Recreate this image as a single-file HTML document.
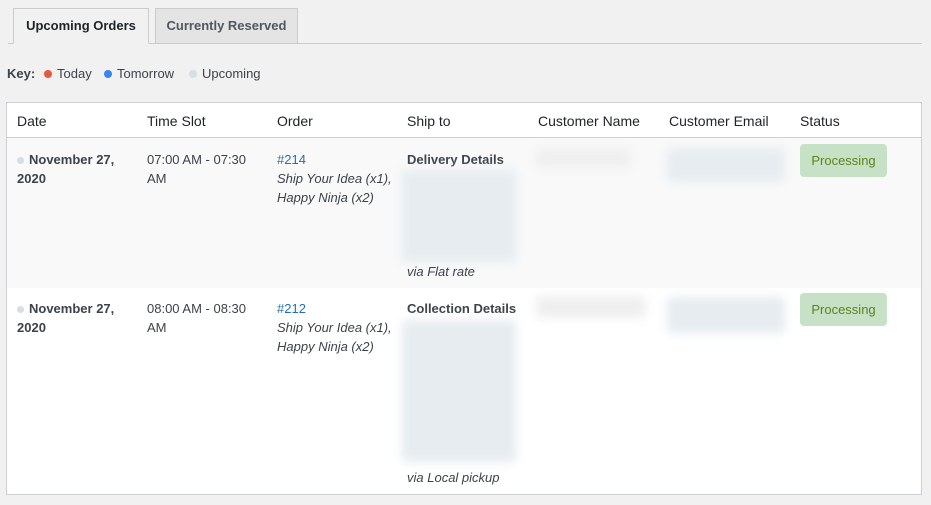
<!DOCTYPE html>
<html><head><style>
*{margin:0;padding:0;box-sizing:border-box}
body{width:931px;height:505px;background:#f1f1f1;font-family:"Liberation Sans",sans-serif;color:#3c434a;font-size:13px;position:relative;overflow:hidden}
.a{position:absolute;white-space:nowrap}
.tab{position:absolute;top:8px;height:36px;border:1px solid #ccc;font-weight:bold;font-size:13px;line-height:34px;text-align:center}
.dot{display:inline-block;width:8px;height:8px;border-radius:50%;margin-right:5px;vertical-align:0}
.blur{position:absolute;background:#e6ecf0;filter:blur(5px);border-radius:4px}
.b{font-weight:bold}
.i{font-style:italic}
.lk{color:#2271b1}
.st{position:absolute;left:800px;width:87px;height:33px;background:#c6e1c6;color:#5b841b;border-radius:4px;text-align:center;line-height:33px;font-size:13px}
</style></head><body>
<div class="a" style="left:8px;top:43px;width:914px;height:1px;background:#ccc"></div>
<div class="tab" style="left:13px;width:136px;background:#f1f1f1;border-bottom-color:#f1f1f1;color:#1d2327">Upcoming Orders</div>
<div class="tab" style="left:155px;width:143px;background:#e4e4e4;color:#50575e">Currently Reserved</div>
<div class="a" style="left:7px;top:66px;font-size:13px;color:#3c434a"><b>Key:</b><span style="margin-left:8px" class="dot" style="background:#e9573f"></span></div>
<div class="a" style="left:44px;top:66px"><span class="dot" style="background:#e9573f"></span>Today</div>
<div class="a" style="left:104px;top:66px"><span class="dot" style="background:#3d83ea"></span>Tomorrow</div>
<div class="a" style="left:189px;top:66px"><span class="dot" style="background:#d5dfe4"></span>Upcoming</div>
<div class="a" style="left:6px;top:102px;width:916px;height:393px;background:#fff;border:1px solid #ccd0d4"></div>
<div class="a" style="left:7px;top:137px;width:914px;height:1px;background:#ccd0d4"></div>
<div class="a" style="left:7px;top:138px;width:914px;height:150px;background:#f9f9f9"></div>
<div class="a" style="top:113px;left:17px;font-size:14px;color:#1d2327">Date</div>
<div class="a" style="top:113px;left:147px;font-size:14px;color:#1d2327">Time Slot</div>
<div class="a" style="top:113px;left:277px;font-size:14px;color:#1d2327">Order</div>
<div class="a" style="top:113px;left:407px;font-size:14px;color:#1d2327">Ship to</div>
<div class="a" style="top:113px;left:538px;font-size:14px;color:#1d2327">Customer Name</div>
<div class="a" style="top:113px;left:669px;font-size:14px;color:#1d2327">Customer Email</div>
<div class="a" style="top:113px;left:800px;font-size:14px;color:#1d2327">Status</div>

<div class="a" style="top:150px;left:17px;line-height:19px"><span class="dot" style="background:#d5dfe4;width:7px;height:7px"></span><b>November 27,</b><br><b>2020</b></div>
<div class="a" style="top:150px;left:147px;line-height:19px">07:00 AM - 07:30<br>AM</div>
<div class="a" style="top:150px;left:277px;line-height:19px"><span class="lk">#214</span><br><span class="i">Ship Your Idea (x1),<br>Happy Ninja (x2)</span></div>
<div class="a b" style="top:150px;left:407px;line-height:19px">Delivery Details</div>
<div class="blur" style="left:402px;top:170px;width:114px;height:92px"></div>
<div class="a i" style="top:264px;left:407px">via Flat rate</div>
<div class="blur" style="left:536px;top:148px;width:95px;height:20px;background:#efefef"></div>
<div class="blur" style="left:667px;top:148px;width:118px;height:34px"></div>
<div class="st" style="top:144px">Processing</div>

<div class="a" style="top:299px;left:17px;line-height:19px"><span class="dot" style="background:#d5dfe4;width:7px;height:7px"></span><b>November 27,</b><br><b>2020</b></div>
<div class="a" style="top:299px;left:147px;line-height:19px">08:00 AM - 08:30<br>AM</div>
<div class="a" style="top:299px;left:277px;line-height:19px"><span class="lk">#212</span><br><span class="i">Ship Your Idea (x1),<br>Happy Ninja (x2)</span></div>
<div class="a b" style="top:299px;left:407px;line-height:19px">Collection Details</div>
<div class="blur" style="left:402px;top:320px;width:114px;height:142px"></div>
<div class="a i" style="top:470px;left:407px">via Local pickup</div>
<div class="blur" style="left:536px;top:296px;width:110px;height:22px;background:#efefef"></div>
<div class="blur" style="left:667px;top:297px;width:118px;height:36px"></div>
<div class="st" style="top:293px">Processing</div>
</body></html>
